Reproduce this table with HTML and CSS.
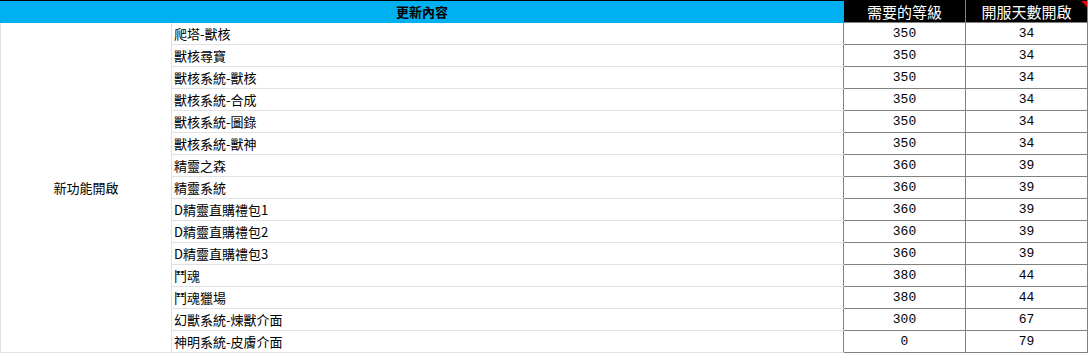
FILE: index.html
```html
<!DOCTYPE html>
<html lang="zh-Hant">
<head>
<meta charset="utf-8">
<link rel="stylesheet" href="styles.css">
</head>
<body>
<table class="sheet">
  <colgroup>
    <col class="c-cat">
    <col class="c-name">
    <col class="c-lv">
    <col class="c-day">
  </colgroup>
  <thead>
    <tr>
      <th class="h-main" colspan="2">更新內容</th>
      <th class="h-dark">需要的等級</th>
      <th class="h-dark h-note">開服天數開啟</th>
    </tr>
  </thead>
  <tbody>
    <tr><td class="cat" rowspan="15">新功能開啟</td><td class="name">爬塔-獸核</td><td class="num">350</td><td class="num">34</td></tr>
    <tr><td class="name">獸核尋寶</td><td class="num">350</td><td class="num">34</td></tr>
    <tr><td class="name">獸核系統-獸核</td><td class="num">350</td><td class="num">34</td></tr>
    <tr><td class="name">獸核系統-合成</td><td class="num">350</td><td class="num">34</td></tr>
    <tr><td class="name">獸核系統-圖錄</td><td class="num">350</td><td class="num">34</td></tr>
    <tr><td class="name">獸核系統-獸神</td><td class="num">350</td><td class="num">34</td></tr>
    <tr><td class="name">精靈之森</td><td class="num">360</td><td class="num">39</td></tr>
    <tr><td class="name">精靈系統</td><td class="num">360</td><td class="num">39</td></tr>
    <tr><td class="name">D精靈直購禮包1</td><td class="num">360</td><td class="num">39</td></tr>
    <tr><td class="name">D精靈直購禮包2</td><td class="num">360</td><td class="num">39</td></tr>
    <tr><td class="name">D精靈直購禮包3</td><td class="num">360</td><td class="num">39</td></tr>
    <tr><td class="name">鬥魂</td><td class="num">380</td><td class="num">44</td></tr>
    <tr><td class="name">鬥魂獵場</td><td class="num">380</td><td class="num">44</td></tr>
    <tr><td class="name">幻獸系統-煉獸介面</td><td class="num">300</td><td class="num">67</td></tr>
    <tr><td class="name">神明系統-皮膚介面</td><td class="num">0</td><td class="num">79</td></tr>
  </tbody>
</table>
</body>
</html>
```
FILE: styles.css
```css
html, body {
  margin: 0;
  padding: 0;
  background: #ffffff;
}

.sheet {
  border-collapse: collapse;
  table-layout: fixed;
  width: 1087px;
  font-family: "Noto Sans CJK TC", "Noto Sans", sans-serif;
  font-size: 13px;
  color: #000000;
}

.c-cat { width: 171px; }
.c-name { width: 672px; }
.c-lv { width: 122px; }
.c-day { width: 122px; }

.sheet th,
.sheet td {
  padding: 0;
  height: 21px;
  line-height: 21px;
  white-space: nowrap;
  overflow: hidden;
}

.h-main {
  background: #00b0f0;
  font-weight: bold;
  text-align: center;
  border-top: 1px solid #000000;
  border-left: 1px solid #00b0f0;
  border-bottom: 1px solid #00b0f0;
}

.h-dark {
  background: #000000;
  color: #ffffff;
  font-size: 15px;
  font-weight: normal;
  text-align: center;
  border: 1px solid #808080;
  border-top-color: #000000;
}

.h-note {
  position: relative;
}

.h-note::after {
  content: "";
  position: absolute;
  top: 0;
  right: 0;
  border-top: 6px solid #e00000;
  border-left: 6px solid transparent;
}

.cat {
  text-align: center;
  vertical-align: middle;
  border: 1px solid #e1e1e1;
}

.name {
  padding-left: 2px !important;
  border: 1px solid #e1e1e1;
  border-right: 1px solid #808080;
}

.num {
  font-family: "Liberation Mono", "DejaVu Sans Mono", monospace;
  font-size: 13px;
  text-align: center;
  border: 1px solid #808080;
}
```
